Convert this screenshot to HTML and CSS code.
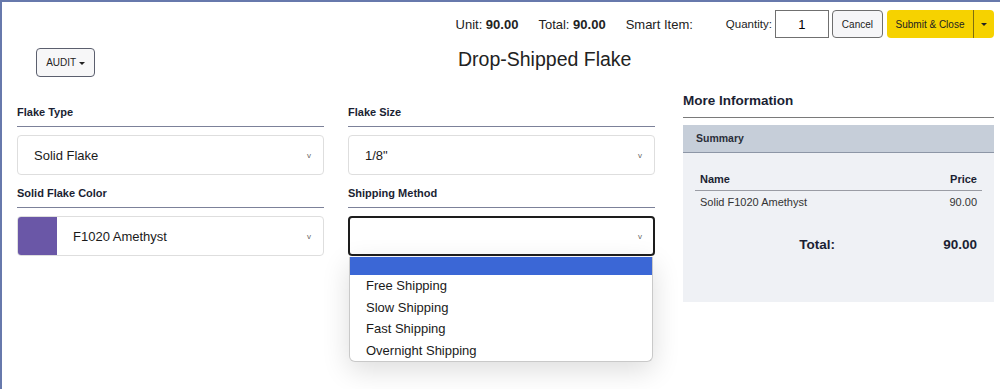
FILE: index.html
```html
<!DOCTYPE html>
<html lang="en">
  <head>
    <meta charset="UTF-8" />
    <title>Drop-Shipped Flake</title>
    <link rel="stylesheet" href="styles.css">
  </head>
  <body>
    <div class="page">
      <!-- Pasek górny: ceny, ilość, akcje -->
      <div class="topbar">
        <span>Unit: <b>90.00</b></span>
        <span>Total: <b>90.00</b></span>
        <span class="smart">Smart Item:</span>
        <label class="qty">Quantity: <input class="qty-input" value="1"></label>
        <button class="btn-cancel">Cancel</button>
        <div class="btn-submit">
          <button class="submit-main">Submit &amp; Close</button>
          <button class="submit-caret"><span class="caret"></span></button>
        </div>
      </div>

      <!-- Nagłówek -->
      <div class="header">
        <button class="btn-audit">AUDIT <span class="caret"></span></button>
        <h1 class="title">Drop-Shipped Flake</h1>
      </div>

      <div class="main">
        <!-- Formularz -->
        <div class="form">
          <div class="field">
            <div class="field-label">Flake Type</div>
            <div class="select"><span class="select-text">Solid Flake</span><span class="chev">v</span></div>
          </div>
          <div class="field">
            <div class="field-label">Flake Size</div>
            <div class="select"><span class="select-text">1/8"</span><span class="chev">v</span></div>
          </div>
          <div class="field">
            <div class="field-label">Solid Flake Color</div>
            <div class="select select-color">
              <span class="swatch"></span>
              <span class="select-text">F1020 Amethyst</span><span class="chev">v</span>
            </div>
          </div>
          <div class="field">
            <div class="field-label">Shipping Method</div>
            <div class="select select-open">
              <span class="select-text"></span><span class="chev">v</span>
              <div class="options">
                <div class="option option-active"></div>
                <div class="option">Free Shipping</div>
                <div class="option">Slow Shipping</div>
                <div class="option">Fast Shipping</div>
                <div class="option">Overnight Shipping</div>
              </div>
            </div>
          </div>
        </div>

        <!-- Panel informacji -->
        <div class="info">
          <h2 class="info-title">More Information</h2>
          <div class="panel">
            <div class="panel-head">Summary</div>
            <div class="panel-body">
              <div class="row row-head"><span>Name</span><span>Price</span></div>
              <div class="row"><span>Solid F1020 Amethyst</span><span>90.00</span></div>
              <div class="total"><span class="total-label">Total:</span><span class="total-value">90.00</span></div>
            </div>
          </div>
        </div>
      </div>
    </div>
  </body>
</html>
```

FILE: styles.css
```css
body {
  margin: 0;
  font-family: "Liberation Sans", Arial, sans-serif;
  color: #1e2130;
  background: #fff;
}
.page {
  border-top: 2px solid #6779ac;
  border-left: 2px solid #6779ac;
  min-height: 100vh;
  box-sizing: border-box;
}
/* Pasek górny */
.topbar {
  display: flex;
  justify-content: flex-end;
  align-items: center;
  gap: 20px;
  height: 28px;
  margin-top: 8px;
  padding-right: 6px;
  font-size: 13px;
  color: #222;
}
.smart {
  margin-right: 13px;
}
.qty {
  display: flex;
  align-items: center;
  gap: 3px;
  font-size: 11.5px;
  margin-right: -17px;
}
.qty-input {
  width: 54px;
  height: 28px;
  box-sizing: border-box;
  border: 1px solid #707070;
  text-align: center;
  font-family: inherit;
  font-size: 13px;
  padding: 0;
}
.btn-cancel {
  height: 28px;
  padding: 0 9px;
  border: 1px solid #6e6e6e;
  border-radius: 4px;
  background: #f6f6f8;
  font-family: inherit;
  font-size: 10px;
  color: #222;
  margin-right: -16px;
}
.btn-submit {
  display: flex;
  height: 28px;
  border-radius: 4px;
  overflow: hidden;
  background: #f6d200;
}
.btn-submit button {
  border: 0;
  background: transparent;
  font-family: inherit;
  font-size: 10px;
  color: #222;
  height: 28px;
}
.submit-main {
  width: 86px;
  padding: 0;
}
.submit-caret {
  width: 21px;
  border-left: 1px solid #7d6e10 !important;
  display: flex;
  align-items: center;
  justify-content: center;
}
.caret {
  display: inline-block;
  width: 0;
  height: 0;
  border-left: 3px solid transparent;
  border-right: 3px solid transparent;
  border-top: 3px solid #222;
  vertical-align: middle;
}
/* Nagłówek */
.header {
  display: flex;
  align-items: flex-start;
  margin-top: 10px;
  padding-left: 34px;
}
.btn-audit {
  width: 59px;
  height: 29px;
  border: 1px solid #5b5f6e;
  border-radius: 4px;
  background: #f7f7f8;
  font-family: inherit;
  font-size: 10px;
  color: #222;
  padding: 0;
}
.title {
  margin: -1px 0 0 363px;
  font-size: 19.5px;
  font-weight: normal;
  line-height: 24px;
  color: #222;
}
/* Układ główny */
.main {
  display: flex;
  align-items: flex-start;
  gap: 28px;
  margin-top: 15px;
  padding-left: 15px;
}
.form {
  display: grid;
  grid-template-columns: 307px 307px;
  column-gap: 24px;
  row-gap: 10px;
  margin-top: 12px;
}
.field-label {
  font-size: 11px;
  font-weight: bold;
  line-height: 16px;
  padding-bottom: 6px;
  border-bottom: 1px solid #7c8199;
  margin-bottom: 8px;
  color: #1b1f33;
}
.select {
  position: relative;
  display: flex;
  align-items: center;
  height: 40px;
  box-sizing: border-box;
  border: 1px solid #dedede;
  border-radius: 4px;
  padding-left: 16px;
  font-size: 13px;
  color: #1a1a1a;
}
.select-text {
  flex: 1;
}
.chev {
  font-size: 8px;
  color: #666;
  padding-right: 12px;
}
.select-color {
  padding-left: 0;
}
.swatch {
  align-self: stretch;
  width: 39px;
  margin-right: 16px;
  border-radius: 3px 0 0 3px;
  background: #6a57a7;
}
.select-open {
  border: 2px solid #1d1d1d;
  padding-left: 15px;
}
.select-open .chev {
  padding-right: 11px;
}
/* Rozwinięta lista */
.options {
  position: absolute;
  top: 39px;
  left: -1px;
  right: 0;
  background: #fff;
  border: 1px solid #c9c9c9;
  border-top: 0;
  border-radius: 0 0 6px 6px;
  box-shadow: 0 8px 28px rgba(0, 0, 0, 0.14);
  overflow: hidden;
}
.option {
  height: 21.5px;
  line-height: 22.5px;
  padding-left: 16px;
  font-size: 13px;
  color: #1a1a1a;
}
.option-active {
  height: 18px;
  background: #3b67d6;
}
/* Panel informacji */
.info {
  width: 311px;
}
.info-title {
  margin: 0 0 7px;
  font-size: 13.5px;
  line-height: 18px;
  padding-bottom: 7px;
  border-bottom: 1px solid #7a7a7a;
  color: #1b1f33;
}
.panel {
  background: #eff1f5;
}
.panel-head {
  height: 27px;
  line-height: 27px;
  padding-left: 13px;
  background: #c6ced9;
  border-bottom: 1px solid #8d96a6;
  font-size: 10.5px;
  font-weight: bold;
  color: #2a2e3a;
}
.panel-body {
  min-height: 149px;
  box-sizing: border-box;
  padding: 15px 12px 0;
}
.row {
  display: flex;
  justify-content: space-between;
  padding: 0 5px;
  font-size: 11px;
  line-height: 23px;
  color: #333;
}
.row-head {
  line-height: 22px;
  font-weight: bold;
  color: #1b1f33;
  border-bottom: 1px solid #9a9ca4;
}
.total {
  display: flex;
  margin-top: 21px;
  font-size: 13.5px;
  font-weight: bold;
  line-height: 20px;
  color: #1b1f33;
}
.total-label {
  width: 140px;
  text-align: right;
}
.total-value {
  flex: 1;
  text-align: right;
  padding-right: 5px;
}
```
